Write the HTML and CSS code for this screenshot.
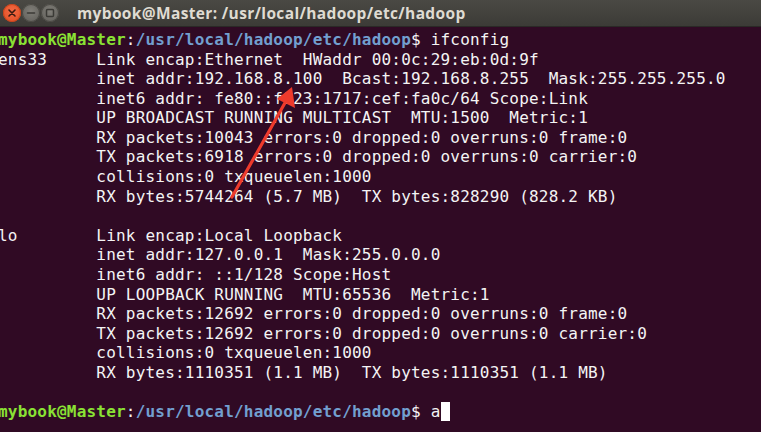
FILE: index.html
```html
<!DOCTYPE html>
<html>
<head>
<meta charset="utf-8">
<link rel="stylesheet" href="styles.css">
</head>
<body>
<div class="window">
  <div class="titlebar">
    <div class="buttons">
      <span class="btn close"><svg width="18" height="18" viewBox="0 0 18 18"><path d="M6 6 L12 12 M12 6 L6 12" stroke="#3a1a10" stroke-width="1.6" stroke-linecap="round"/></svg></span>
      <span class="btn"><svg width="18" height="18" viewBox="0 0 18 18"><path d="M5.5 9 H12.5" stroke="#3b3a36" stroke-width="1.6" stroke-linecap="round"/></svg></span>
      <span class="btn"><svg width="18" height="18" viewBox="0 0 18 18"><rect x="5.5" y="5.5" width="7" height="7" rx="1" fill="none" stroke="#3b3a36" stroke-width="1.5"/></svg></span>
    </div>
    <div class="title">mybook@Master: /usr/local/hadoop/etc/hadoop</div>
  </div>
  <div class="term">
<pre class="screen"><span class="user">mybook@Master</span>:<span class="path">/usr/local/hadoop/etc/hadoop</span>$ ifconfig
ens33     Link encap:Ethernet  HWaddr 00:0c:29:eb:0d:9f  
          inet addr:192.168.8.100  Bcast:192.168.8.255  Mask:255.255.255.0
          inet6 addr: fe80::f823:1717:cef:fa0c/64 Scope:Link
          UP BROADCAST RUNNING MULTICAST  MTU:1500  Metric:1
          RX packets:10043 errors:0 dropped:0 overruns:0 frame:0
          TX packets:6918 errors:0 dropped:0 overruns:0 carrier:0
          collisions:0 txqueuelen:1000 
          RX bytes:5744264 (5.7 MB)  TX bytes:828290 (828.2 KB)

lo        Link encap:Local Loopback  
          inet addr:127.0.0.1  Mask:255.0.0.0
          inet6 addr: ::1/128 Scope:Host
          UP LOOPBACK RUNNING  MTU:65536  Metric:1
          RX packets:12692 errors:0 dropped:0 overruns:0 frame:0
          TX packets:12692 errors:0 dropped:0 overruns:0 carrier:0
          collisions:0 txqueuelen:1000 
          RX bytes:1110351 (1.1 MB)  TX bytes:1110351 (1.1 MB)

<span class="user">mybook@Master</span>:<span class="path">/usr/local/hadoop/etc/hadoop</span>$ a<span class="cursor"> </span></pre>
    <svg class="arrow" width="761" height="432" viewBox="0 0 761 432">
      <line x1="232" y1="197" x2="286" y2="101" stroke="#ee3a2c" stroke-width="3.2" stroke-linecap="round"/>
      <polygon points="292,87 295,108 277,99" fill="#ee3a2c"/>
    </svg>
  </div>
</div>
</body>
</html>
```
FILE: styles.css
```css
html, body {
  margin: 0;
  padding: 0;
  background: #300a24;
}
.window {
  width: 761px;
  height: 432px;
  overflow: hidden;
  display: flex;
  flex-direction: column;
}
.titlebar {
  height: 27px;
  flex: none;
  display: flex;
  align-items: center;
  background: linear-gradient(#4a4944, #3c3b37);
  border-bottom: 1px solid #2a2926;
  box-sizing: border-box;
}
.buttons {
  display: flex;
  gap: 1px;
  margin-left: 3px;
}
.btn {
  width: 18px;
  height: 18px;
  border-radius: 50%;
  background: radial-gradient(circle at 50% 40%, #807e78, #5c5b56);
  display: flex;
  box-shadow: inset 0 0 0 1px #4a4944;
}
.btn.close {
  background: radial-gradient(circle at 50% 40%, #f26b45, #df4a1f);
  box-shadow: inset 0 0 0 1px #c5441c;
}
.title {
  margin-left: 18px;
  font-family: "Open Sans", "DejaVu Sans", sans-serif;
  font-weight: 700;
  font-size: 15.5px;
  color: #dfdbd2;
  letter-spacing: 0.35px;
}
.term {
  position: relative;
  flex: 1;
  background: #300a24;
}
.screen {
  margin: 3px 0 0 -2px;
  font-family: "DejaVu Sans Mono", monospace;
  font-size: 16px;
  letter-spacing: 0.2px;
  line-height: 19.58px;
  color: #f4f4f4;
}
.user {
  color: #8ae234;
  font-weight: 700;
}
.path {
  color: #729fcf;
  font-weight: 700;
}
.cursor {
  background: #ffffff;
}
.arrow {
  position: absolute;
  left: 0;
  top: -27px;
  pointer-events: none;
}
```
